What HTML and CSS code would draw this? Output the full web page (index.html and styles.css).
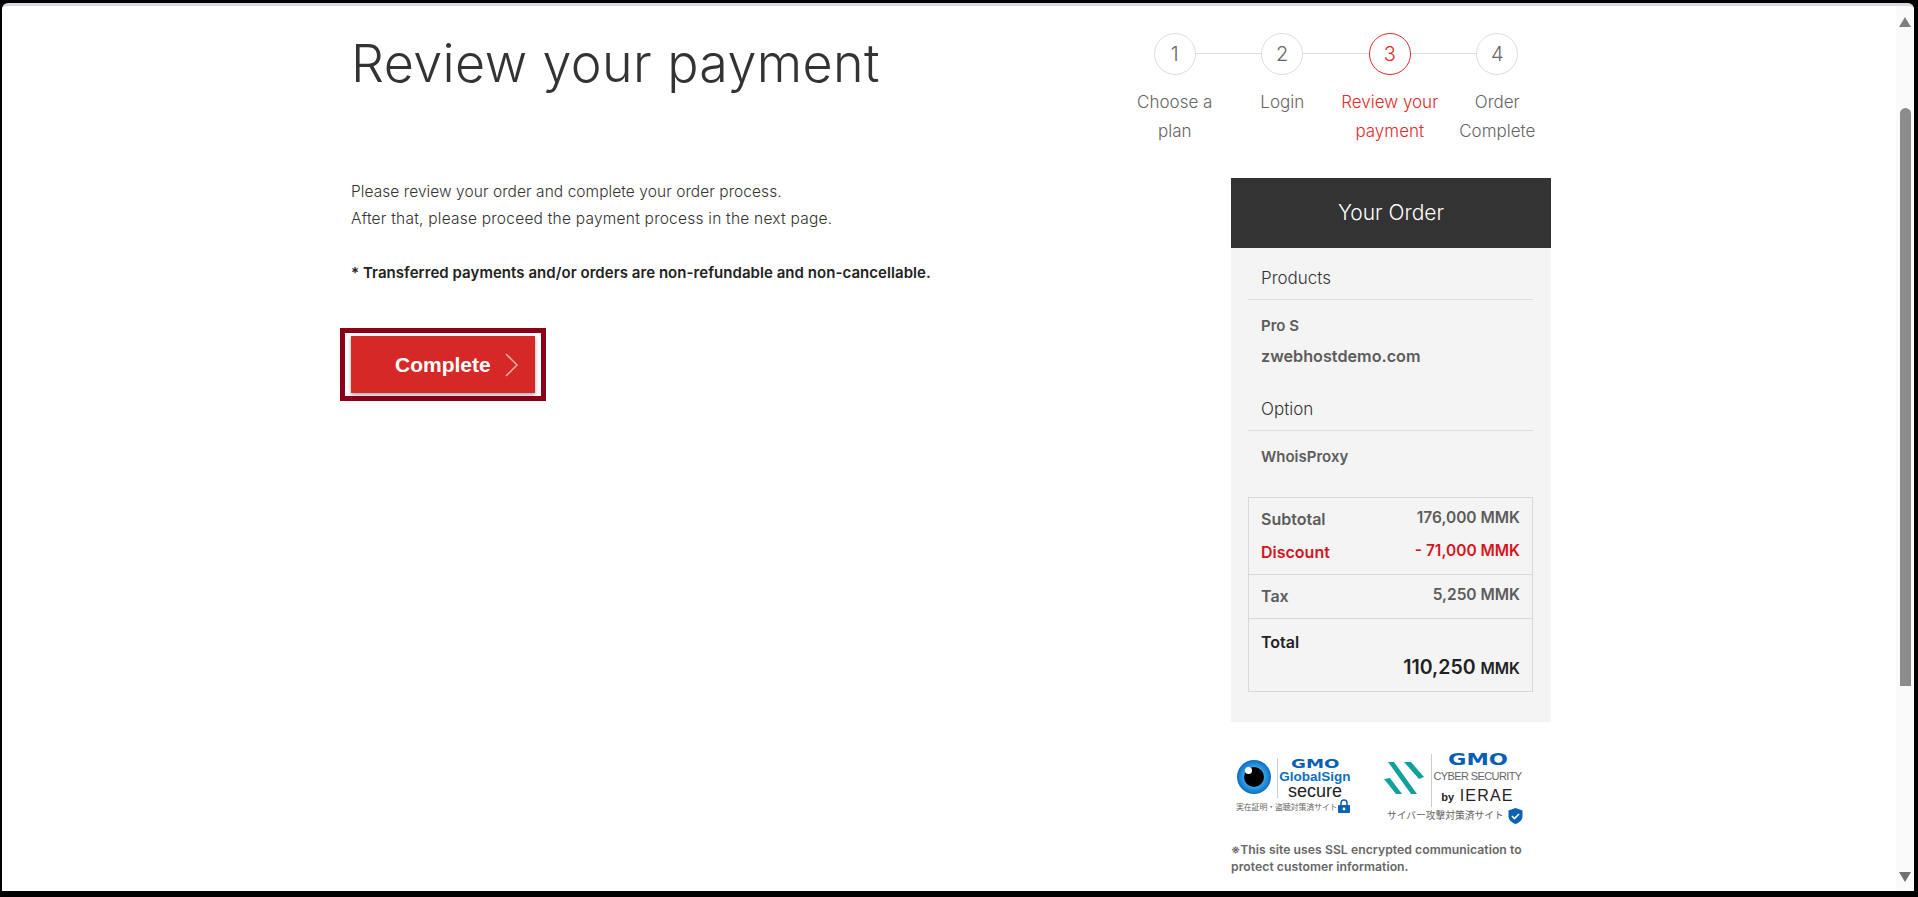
FILE: index.html
```html
<!DOCTYPE html>
<html lang="en">

<head>
    <meta charset="utf-8">
    <title>Review your payment</title>
    <link rel="stylesheet" href="styles.css">
</head>

<body>
    <div class="window">
        <main class="page">
            <section class="content">
                <h1>Review your payment</h1>
                <p class="intro">Please review your order and complete your order process.</p>
                <p class="intro">After that, please proceed the payment process in the next page.</p>
                <p class="notice">* Transferred payments and/or orders are non-refundable and non-cancellable.</p>
                <div class="btn-ring">
                    <button class="btn-complete">
                        <span>Complete</span>
                        <svg class="chevron" width="14" height="24" viewBox="0 0 14 24"><path d="M1 1l11 11L1 23" fill="none" stroke="#f0b0ac" stroke-width="1.5"/></svg>
                    </button>
                </div>
            </section>

            <aside class="side">
                <ol class="steps">
                    <li class="step"><span class="num">1</span><span class="label">Choose a plan</span></li>
                    <li class="step"><span class="num">2</span><span class="label">Login</span></li>
                    <li class="step active"><span class="num">3</span><span class="label">Review your payment</span></li>
                    <li class="step"><span class="num">4</span><span class="label">Order Complete</span></li>
                </ol>

                <div class="order">
                    <h2>Your Order</h2>
                    <div class="order-body">
                        <h3>Products</h3>
                        <p class="item">Pro S</p>
                        <p class="item domain">zwebhostdemo.com</p>
                        <h3 class="option">Option</h3>
                        <p class="item">WhoisProxy</p>

                        <div class="totals">
                            <div class="group">
                                <div class="row"><span>Subtotal</span><span class="amount">176,000 MMK</span></div>
                                <div class="row red"><span>Discount</span><span class="amount">- 71,000 MMK</span></div>
                            </div>
                            <div class="group tax">
                                <div class="row"><span>Tax</span><span class="amount">5,250 MMK</span></div>
                            </div>
                            <div class="group total">
                                <div class="total-label">Total</div>
                                <div class="total-value">110,250 <small>MMK</small></div>
                            </div>
                        </div>
                    </div>
                </div>

                <div class="badges">
                    <div class="badge badge-gs">
                        <div class="badge-top">
                            <svg class="eye" width="34" height="34" viewBox="0 0 34 34">
                                <defs>
                                    <radialGradient id="iris">
                                        <stop offset="0.5" stop-color="#3fb0f0"/>
                                        <stop offset="1" stop-color="#0b6cc4"/>
                                    </radialGradient>
                                </defs>
                                <circle cx="17" cy="17" r="17" fill="url(#iris)"/>
                                <circle cx="17" cy="17" r="10" fill="#000"/>
                                <circle cx="11.500" cy="10.500" r="3.500" fill="#fff"/>
                            </svg>
                            <div class="badge-text">
                                <b class="gmo">GMO</b>
                                <b class="gs">GlobalSign</b>
                                <span class="secure">secure</span>
                            </div>
                        </div>
                        <div class="badge-foot">
                            <span>実在証明・盗聴対策済サイト</span>
                            <svg width="12" height="14" viewBox="0 0 12 14"><path d="M3 6V4a3 3 0 0 1 6 0v2" fill="none" stroke="#0b62b0" stroke-width="1.500"/><rect y="6" width="12" height="8" rx="1" fill="#0b62b0"/><circle cx="6" cy="10" r="1.400" fill="#fff"/></svg>
                        </div>
                    </div>
                    <div class="badge badge-cs">
                        <div class="badge-top">
                            <svg class="stripes" width="40" height="34" viewBox="0 0 40 34">
                                <polygon points="4,0 10,0 33,32 27,32" fill="#12a09b"/>
                                <polygon points="20,0 27,0 40,15 35,17" fill="#12a09b"/>
                                <polygon points="0,17 6,16 18,32 12,32" fill="#12a09b"/>
                            </svg>
                            <div class="badge-text cs-text">
                                <b class="gmo">GMO</b>
                                <span class="cyber">CYBER SECURITY</span>
                                <span class="ierae"><b>by</b> IERAE</span>
                            </div>
                        </div>
                        <div class="badge-foot">
                            <span>サイバー攻撃対策済サイト</span>
                            <svg width="15" height="16" viewBox="0 0 15 16"><path d="M7.500 0l7 2.500V8c0 4-3 6.500-7 8-4-1.500-7-4-7-8V2.500z" fill="#0b62b0"/><path d="M4 8l2.500 2.500L11 6" fill="none" stroke="#fff" stroke-width="1.600"/></svg>
                        </div>
                    </div>
                </div>
                <p class="ssl">※This site uses SSL encrypted communication to protect customer information.</p>
            </aside>
        </main>

        <div class="scrollbar">
            <div class="arrow-up"></div>
            <div class="thumb"></div>
            <div class="arrow-down"></div>
        </div>
    </div>
</body>

</html>
```

FILE: styles.css
```css
* {
    box-sizing: border-box;
}

html,
body {
    height: 100%;
}

body {
    margin: 0;
    padding: 3px 4px 6px 2px;
    background-color: #000;
    overflow: hidden;
    font-family: Inter, "Noto Sans CJK JP", sans-serif;
    font-weight: 300;
    color: #333;
}

.window {
    display: flex;
    height: 100%;
    background-color: #fff;
    border-top: 3px solid #d9d9e1;
    border-radius: 6px 6px 0 0;
    overflow: hidden;
}

.page {
    flex: 1;
    display: flex;
    justify-content: space-between;
    padding: 0 345px 0 349px;
}

/* venstre kolonne */
h1 {
    margin: 26px 0 0;
    font-size: 52px;
    line-height: 64px;
    font-weight: 300;
    letter-spacing: 0.4px;
}

.intro {
    margin: 0;
    font-size: 15.500px;
    line-height: 27px;
    letter-spacing: 0.06px;
}

.intro + .intro {
    letter-spacing: 0.23px;
}

h1 + .intro {
    margin-top: 82px;
}

.notice {
    margin: 27px 0 0;
    font-size: 15px;
    line-height: 27px;
    font-weight: 600;
    letter-spacing: 0.05px;
    color: #222;
}

.btn-ring {
    display: inline-flex;
    margin: 42px 0 0 -11px;
    padding: 3px 6px;
    background-color: #fff;
    border: 5px solid #8b0018;
}

.btn-complete {
    display: flex;
    align-items: center;
    gap: 14px;
    width: 184px;
    height: 57px;
    padding: 0 0 0 44px;
    border: 0;
    background-color: #d62826;
    box-shadow: 0 2px 4px rgba(0, 0, 0, 0.35);
    color: #fff;
    font-family: "Liberation Sans", sans-serif;
    font-size: 21px;
    font-weight: 700;
}

/* trin */
.side {
    width: 432px;
    display: flex;
    flex-direction: column;
    align-items: flex-end;
}

.steps {
    display: flex;
    width: 430px;
    margin: 27px 0 0;
    padding: 0;
    list-style: none;
}

.step {
    position: relative;
    flex: 1;
    display: flex;
    flex-direction: column;
    align-items: center;
    text-align: center;
    color: #666;
}

.step + .step::before {
    content: "";
    position: absolute;
    top: 20px;
    left: -50%;
    width: 100%;
    height: 1px;
    background-color: #ddd;
}

.num {
    position: relative;
    z-index: 1;
    width: 42px;
    height: 42px;
    border: 1px solid #ddd;
    border-radius: 50%;
    background-color: #fff;
    font-size: 20px;
    line-height: 40px;
}

.label {
    width: 104px;
    margin-top: 13px;
    font-size: 17px;
    line-height: 29px;
}

.active {
    color: #e02b2b;
}

.active .num {
    border-color: #e02b2b;
}

/* ordre */
.order {
    width: 320px;
    margin-top: 32px;
}

.order h2 {
    margin: 0;
    height: 70px;
    background-color: #333;
    color: #fff;
    font-size: 21px;
    font-weight: 300;
    line-height: 70px;
    text-align: center;
}

.order-body {
    height: 474px;
    padding: 13px 18px 0 17px;
    background-color: #f4f4f4;
}

h3 {
    margin: 0;
    height: 39px;
    padding-left: 13px;
    border-bottom: 1px solid #ddd;
    font-size: 17px;
    font-weight: 300;
    line-height: 34px;
}

.option {
    margin-top: 21px;
}

.item {
    margin: 0;
    padding-left: 13px;
    font-size: 15px;
    font-weight: 600;
    line-height: 30px;
    color: #5c5c5c;
}

.domain {
    font-size: 16.200px;
}

h3 + .item {
    margin-top: 11px;
}

.totals {
    margin-top: 25px;
    border: 1px solid #d8d8d8;
    font-size: 16px;
    font-weight: 600;
    color: #5c5c5c;
}

.group {
    padding: 8px 12px 2px 12px;
}

.group + .group {
    border-top: 1px solid #d8d8d8;
}

.row {
    display: flex;
    justify-content: space-between;
    height: 33px;
    line-height: 26px;
}

.amount {
    margin-top: -1px;
    font-size: 15.500px;
}

.red {
    color: #d7141c;
}

.tax {
    height: 44px;
    padding-top: 8px;
}

.tax .amount {
    margin-top: -1px;
}

.total {
    height: 73px;
    padding-top: 11px;
    color: #222;
}

.total-label {
    line-height: 25px;
}

.total-value {
    font-size: 19.500px;
    line-height: 25px;
    text-align: right;
}

.total-value small {
    font-size: 15.500px;
}

/* badges */
.badges {
    display: flex;
    width: 320px;
    height: 69px;
    margin-top: 32px;
    padding-left: 5px;
}

.badge-gs {
    width: 116px;
    margin-top: 4px;
}

.badge-cs {
    margin-left: 32px;
}

.badge-top {
    display: flex;
}

.eye {
    margin: 2px 0 0 1px;
}

.badge-text {
    display: flex;
    flex-direction: column;
    align-items: center;
    flex: 1;
    margin-left: 6px;
    border-left: 1px solid #ccc;
    font-family: "Liberation Sans", sans-serif;
    color: #222;
}

.gmo {
    font-family: "DejaVu Sans", sans-serif;
    font-weight: 700;
    color: #0a5fb4;
    font-size: 13px;
    line-height: 11px;
    transform: scaleX(1.4);
}

.gs {
    color: #0a6fc2;
    font-weight: 700;
    font-size: 13.500px;
    line-height: 16px;
}

.secure {
    font-size: 18px;
    line-height: 13px;
    font-weight: 400;
}

.stripes {
    margin-top: 8px;
}

.badge-cs .badge-top {
    width: 139px;
}

.cs-text {
    margin-left: 7px;
}

.cs-text .gmo {
    font-size: 15px;
    line-height: 12px;
    transform: scaleX(1.5);
}

.cyber {
    font-size: 11px;
    line-height: 20px;
    letter-spacing: -0.600px;
    font-weight: 400;
    color: #666;
}

.ierae {
    font-size: 16px;
    line-height: 19px;
    font-weight: 400;
    letter-spacing: 1.200px;
}

.ierae b {
    font-size: 11px;
    font-weight: 700;
    letter-spacing: 0;
}

.badge-foot {
    display: flex;
    align-items: flex-end;
    gap: 1px;
    margin-top: 1px;
    color: #666;
    font-size: 8px;
    line-height: 12px;
    font-weight: 400;
    white-space: nowrap;
    letter-spacing: -0.200px;
}

.badge-cs .badge-foot {
    align-items: center;
    gap: 4px;
    margin-left: 3px;
    font-size: 9.750px;
    letter-spacing: 0;
}

.ssl {
    width: 320px;
    margin: 18px 0 0;
    font-size: 12.200px;
    font-weight: 600;
    line-height: 17px;
    letter-spacing: 0.05px;
    color: #666;
}

/* scrollbar */
.scrollbar {
    width: 18px;
    display: flex;
    flex-direction: column;
    align-items: center;
    background-color: #fafafa;
}

.thumb {
    width: 11px;
    height: 578px;
    margin-top: 81px;
    background-color: #8c8c8c;
    border-radius: 6px 6px 0 0;
}

.arrow-up,
.arrow-down {
    width: 0;
    height: 0;
    border-left: 6px solid transparent;
    border-right: 6px solid transparent;
}

.arrow-up {
    margin-top: 11px;
    border-bottom: 10px solid #808080;
}

.arrow-down {
    margin-top: 186px;
    border-top: 10px solid #707070;
}
```
